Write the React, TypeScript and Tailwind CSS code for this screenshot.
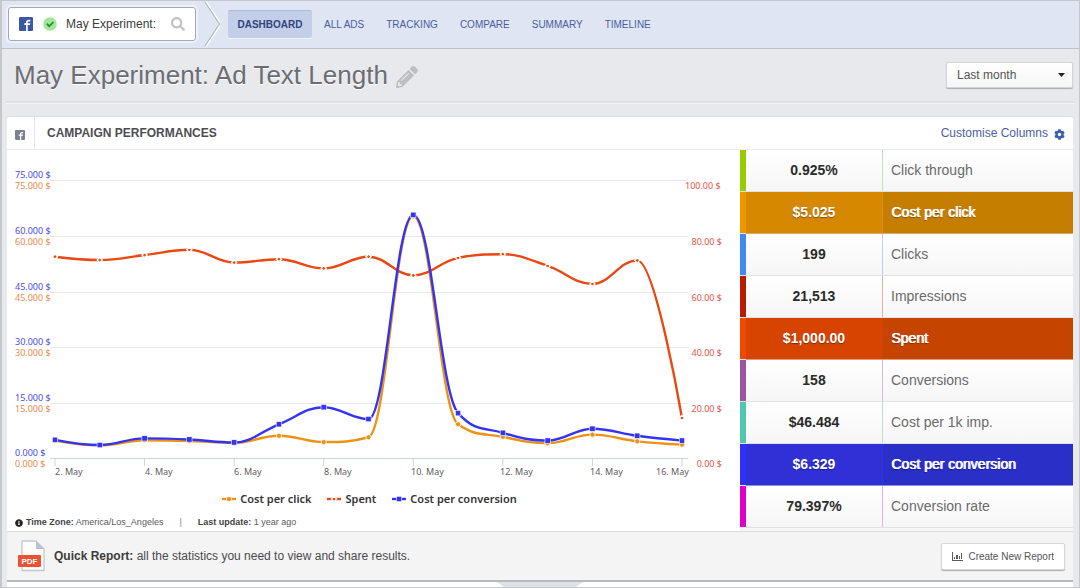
import clsx from 'clsx';
import { FaCog, FaInfoCircle, FaPencilAlt, FaSearch } from 'react-icons/fa';
import { ImFacebook2 } from 'react-icons/im';

type Marker = 'circle' | 'diamond' | 'square';

interface Series {
   name: string;
   color: string;
   marker: Marker;
   max: number;
   values: number[];
}

interface Point {
   x: number;
   y: number;
}

const NAV_ITEMS = ['ALL ADS', 'TRACKING', 'COMPARE', 'SUMMARY', 'TIMELINE'];

const STATS = [
   { value: '0.925%', label: 'Click through', strip: 'bg-[#99cc00]', divider: 'border-[#c5e3b4]' },
   {
      value: '$5.025',
      label: 'Cost per click',
      strip: 'bg-[#ee9500]',
      divider: 'border-[#e08f05]',
      active: 'border-[#dca768]',
      valueBg: 'bg-[#d68800]',
      labelBg: 'bg-[#c67e00]',
   },
   { value: '199', label: 'Clicks', strip: 'bg-[#4488f2]', divider: 'border-[#b9cff8]' },
   { value: '21,513', label: 'Impressions', strip: 'bg-[#b81c00]', divider: 'border-[#dfb0aa]' },
   {
      value: '$1,000.00',
      label: 'Spent',
      strip: 'bg-[#ee4b00]',
      divider: 'border-[#cf4600]',
      active: 'border-[#e39a78]',
      valueBg: 'bg-[#d64400]',
      labelBg: 'bg-[#c54400]',
   },
   { value: '158', label: 'Conversions', strip: 'bg-[#9c569f]', divider: 'border-[#d4bbd8]' },
   { value: '$46.484', label: 'Cost per 1k imp.', strip: 'bg-[#51c6b0]', divider: 'border-[#b7e2d2]' },
   {
      value: '$6.329',
      label: 'Cost per conversion',
      strip: 'bg-[#3030fa]',
      divider: 'border-[#3333e0]',
      active: 'border-[#8e90d8]',
      valueBg: 'bg-[#2f30d6]',
      labelBg: 'bg-[#2a2fc8]',
   },
   { value: '79.397%', label: 'Conversion rate', strip: 'bg-[#dd00c8]', divider: 'border-[#eeb0e2]' },
];

const SERIES: Series[] = [
   {
      name: 'Cost per click',
      color: '#ec9213',
      marker: 'circle',
      max: 75,
      values: [4.7, 3.4, 4.8, 4.6, 4.1, 6.0, 4.3, 5.6, 65.2, 9.1, 5.7, 4.0, 6.3, 4.5, 3.6],
   },
   {
      name: 'Spent',
      color: '#ea4711',
      marker: 'diamond',
      max: 100,
      values: [72.4, 71.2, 73.0, 74.9, 70.3, 71.5, 68.2, 72.4, 65.7, 72.0, 73.3, 69.1, 62.6, 71.1, 14.4],
   },
   {
      name: 'Cost per conversion',
      color: '#3333f5',
      marker: 'square',
      max: 75,
      values: [4.9, 3.5, 5.3, 5.0, 4.2, 9.1, 13.7, 10.5, 65.6, 12.1, 6.8, 4.7, 7.9, 6.0, 4.7],
   },
];

// Plot area, in viewBox units
const PLOT = { left: 48, right: 675, top: 30, bottom: 308 };
const GRID_LINES = [30, 86, 142, 197, 253, 308];
const LEFT_TICKS = ['75.000 $', '60.000 $', '45.000 $', '30.000 $', '15.000 $', '0.000 $'];
const RIGHT_TICKS = ['100.00 $', '80.00 $', '60.00 $', '40.00 $', '20.00 $', '0.00 $'];
const DATES = [
   { label: '2. May', x: 48 },
   { label: '4. May', x: 138 },
   { label: '6. May', x: 227 },
   { label: '8. May', x: 317 },
   { label: '10. May', x: 404 },
   { label: '12. May', x: 493 },
   { label: '14. May', x: 583 },
   { label: '16. May', x: 649 },
];

const stepX = (PLOT.right - PLOT.left) / 14;

function toPoints({ values, max }: Series): Point[] {
   return values.map((v, i) => ({
      x: PLOT.left + i * stepX,
      y: PLOT.bottom - (v / max) * (PLOT.bottom - PLOT.top),
   }));
}

// Smooth line that never overshoots its own data points
function splinePath(pts: Point[]) {
   let d = `M${pts[0].x} ${pts[0].y}`;
   let prevCtrl = pts[0];

   for (let i = 1; i < pts.length; i++) {
      const p = pts[i];
      const last = pts[i - 1];
      const next = pts[i + 1];
      let left = p;
      let right = p;

      if (next) {
         const lx = (1.5 * p.x + last.x) / 2.5;
         const rx = (1.5 * p.x + next.x) / 2.5;
         let ly = (1.5 * p.y + last.y) / 2.5;
         let ry = (1.5 * p.y + next.y) / 2.5;
         const fix = ((ry - ly) * (rx - p.x)) / (rx - lx) + p.y - ry;
         ly += fix;
         ry += fix;

         if (ly > last.y && ly > p.y) {
            ly = Math.max(last.y, p.y);
            ry = 2 * p.y - ly;
         } else if (ly < last.y && ly < p.y) {
            ly = Math.min(last.y, p.y);
            ry = 2 * p.y - ly;
         }
         if (ry > next.y && ry > p.y) {
            ry = Math.max(next.y, p.y);
            ly = 2 * p.y - ry;
         } else if (ry < next.y && ry < p.y) {
            ry = Math.min(next.y, p.y);
            ly = 2 * p.y - ry;
         }
         left = { x: lx, y: ly };
         right = { x: rx, y: ry };
      }

      d += ` C${prevCtrl.x} ${prevCtrl.y} ${left.x} ${left.y} ${p.x} ${p.y}`;
      prevCtrl = right;
   }
   return d;
}

function MarkerShape({ type, x, y, color }: { type: Marker; x: number; y: number; color: string }) {
   if (type === 'circle') {
      return <circle cx={x} cy={y} r="2.6" fill={color} stroke="#fff" strokeWidth="0.8" />;
   }
   if (type === 'diamond') {
      return (
         <path d={`M${x} ${y - 2.6}l2.6 2.6l-2.6 2.6l-2.6 -2.6z`} fill={color} stroke="#fff" strokeWidth="1.3" />
      );
   }
   return <rect x={x - 2.7} y={y - 2.7} width="5.4" height="5.4" fill={color} stroke="#fff" strokeWidth="0.6" />;
}

function Chart() {
   return (
      <svg
         viewBox="0 0 733 335"
         className="block h-auto w-full font-['Noto_Sans',sans-serif] text-[9px]"
         role="img"
         aria-label="Campaign performances"
      >
         {GRID_LINES.map((y, i) => (
            <g key={y}>
               <line
                  x1="43"
                  x2="681"
                  y1={y + 0.5}
                  y2={y + 0.5}
                  stroke={i === 5 ? '#c9d5ea' : '#e9e9e9'}
                  strokeWidth="1"
               />
               <text x="8" y={y - 2} fill="#4a4af5">
                  {LEFT_TICKS[i]}
               </text>
               <text x="8" y={y + 9} fill="#ea8a4a">
                  {LEFT_TICKS[i]}
               </text>
               <text x={i === 0 ? 678 : 715} y={y + 9} textAnchor={i === 0 ? 'start' : 'end'} fill="#ea5545">
                  {RIGHT_TICKS[i]}
               </text>
            </g>
         ))}
         {DATES.map(({ label, x }, i) => (
            <g key={label}>
               <line
                  x1={PLOT.left + i * 2 * stepX}
                  x2={PLOT.left + i * 2 * stepX}
                  y1="308"
                  y2="316"
                  stroke="#c9d5ea"
               />
               <text x={x} y="325" fill="#606060">
                  {label}
               </text>
            </g>
         ))}
         {SERIES.map((s) => {
            const pts = toPoints(s);
            return (
               <g key={s.name}>
                  <path d={splinePath(pts)} fill="none" stroke={s.color} strokeWidth="2.4" strokeLinejoin="round" />
                  {pts.map((p) => (
                     <MarkerShape key={p.x} type={s.marker} x={p.x} y={p.y} color={s.color} />
                  ))}
               </g>
            );
         })}
      </svg>
   );
}

function Legend() {
   return (
      <ul className="flex h-7 items-center justify-center gap-4 pr-2 font-['Noto_Sans',sans-serif] text-[11px] font-semibold text-[#333]">
         {SERIES.map((s) => (
            <li key={s.name} className="flex items-center gap-1">
               <svg width="14" height="8" viewBox="0 0 14 8">
                  <path d="M0 4h14" stroke={s.color} strokeWidth="2.4" />
                  <MarkerShape type={s.marker} x={7} y={4} color={s.color} />
               </svg>
               {s.name}
            </li>
         ))}
      </ul>
   );
}

function StatsTable() {
   return (
      <table className="h-[378px] w-full border-separate border-spacing-0 text-sm">
         <tbody>
            {STATS.map((s) => (
               <tr key={s.label} className="h-[42px]">
                  <td className={clsx('w-[6px] border-b border-[#e2e2e2] p-0', s.strip)} />
                  <td
                     className={clsx(
                        'w-[136px] border-b p-0 pb-px text-center font-bold',
                        s.active
                           ? [s.active, s.valueBg, 'text-white [text-shadow:0_1px_1px_#0006]']
                           : 'border-[#e2e2e2] bg-linear-to-b from-white to-[#f6f6f6] text-[#2b2b2b]',
                     )}
                  >
                     {s.value}
                  </td>
                  <th
                     scope="row"
                     className={clsx(
                        'border-b p-0 text-left font-normal',
                        s.active
                           ? [s.active, s.labelBg, 'text-white [text-shadow:1px_0_0_#fff,0_1px_1px_#0006]']
                           : 'border-[#e2e2e2] bg-linear-to-b from-white to-[#f6f6f6] text-[#6a6a6a]',
                     )}
                  >
                     <div className={clsx('flex h-[41px] items-center border-l pb-px pl-2', s.divider)}>{s.label}</div>
                  </th>
               </tr>
            ))}
         </tbody>
      </table>
   );
}

function TopBar() {
   return (
      <header className="flex h-12 items-center border-b border-[#bfc0c4] bg-[#dfe5f3] pb-px">
         <div className="ml-[6px] flex h-[34px] w-[188px] items-center rounded-[3px] border border-[#a6a9b1] bg-white px-[10px] shadow-[0_0_0_2px_#edf1f9]">
            <ImFacebook2 className="h-[14px] w-[14px] shrink-0 text-[#3a57a2]" />
            <svg className="ml-[10px] h-[14px] w-[14px] shrink-0" viewBox="0 0 14 14">
               <circle cx="7" cy="7" r="6.8" fill="#a5e69a" />
               <path d="M3.8 6.8l2.4 2.3l4.2-4" fill="none" stroke="#239a35" strokeWidth="2" />
            </svg>
            <input
               type="text"
               aria-label="Experiment"
               defaultValue="May Experiment:"
               className="ml-[9px] w-full min-w-0 bg-transparent text-xs text-[#3c3c3c] outline-none"
            />
            <FaSearch className="h-[14px] w-[14px] shrink-0 text-[#c4c4c4]" />
         </div>
         <svg className="ml-2 h-[46px] w-4" viewBox="0 0 16 46">
            <path d="M2.5 1L17 23L2.5 45" fill="none" stroke="#fff" strokeWidth="1.5" />
            <path d="M1 1L15.5 23L1 45" fill="none" stroke="#b3b6bd" strokeWidth="1.2" />
         </svg>
         <nav className="ml-2 flex items-center gap-[22px] text-[10px] text-[#4a5da0]">
            <a
               href="#dashboard"
               className="-mr-[10px] flex h-7 w-[84px] items-center justify-center rounded-[2px] border-t border-[#aebbd8] bg-[#c3cfe9] font-bold text-[#32437c] shadow-[0_1px_0_#f2f5fb]"
            >
               DASHBOARD
            </a>
            {NAV_ITEMS.map((item) => (
               <a key={item} href="#" className="hover:underline">
                  {item}
               </a>
            ))}
         </nav>
      </header>
   );
}

function PdfIcon() {
   return (
      <svg className="h-8 w-7" viewBox="0 0 28 32">
         <path d="M5 1h14l8 8v21.5H5z" fill="#fdfdfd" stroke="#c3c8d0" strokeWidth="1.3" strokeLinejoin="round" />
         <path d="M19 1l8 8h-8z" fill="#bcc2ca" />
         <rect x="1" y="15" width="23" height="12" rx="1" fill="#ec5232" />
         <text x="12.5" y="24" textAnchor="middle" fontSize="8" fontWeight="700" fill="#fff">
            PDF
         </text>
      </svg>
   );
}

export default function App() {
   return (
      <div className="border-t border-r border-b border-l-2 border-[#c6c7ca] bg-[#e8e9ed] font-['Liberation_Sans',Arial,sans-serif] text-[#444]">
         <TopBar />

         <div className="mx-1 flex h-[54px] items-center border-b-2 border-[#dedfe2] pr-[2px] pl-2 shadow-[0_1px_0_#f4f4f6]">
            <h1 className="text-[26px] leading-8 text-[#6b6d73] [text-shadow:0_1px_0_#fff]">
               May Experiment: Ad Text Length
            </h1>
            <button type="button" aria-label="Edit title" className="mt-1 ml-2 text-[#bdbec1]">
               <FaPencilAlt className="h-[22px] w-[22px]" />
            </button>
            <div className="relative ml-auto">
               <select
                  aria-label="Period"
                  className="h-[26px] w-[127px] appearance-none rounded-[2px] border border-[#d5d5d7] bg-linear-to-b from-white to-[#f6f6f6] pl-[10px] text-xs text-[#555] shadow-[0_1px_1px_#aaa]"
               >
                  <option>Last month</option>
               </select>
               <svg className="pointer-events-none absolute top-[11px] right-2" width="7" height="4" viewBox="0 0 7 4">
                  <path d="M0 0h7L3.5 4z" fill="#222" />
               </svg>
            </div>
         </div>

         <main className="mt-[13px] mr-[6px] ml-[5px]">
            <section className="rounded-t-[3px] border-t border-[#dcdde0] bg-white">
               <div className="flex h-[33px] items-center border-b border-[#ebebeb] pr-2">
                  <div className="flex h-full w-7 items-center border-r border-[#e4e4e4] pl-2">
                     <ImFacebook2 className="mt-1 h-[10px] w-[10px] text-[#7b808c]" />
                  </div>
                  <h2 className="ml-3 text-xs font-bold text-[#4c4d52]">CAMPAIGN PERFORMANCES</h2>
                  <a href="#columns" className="ml-auto flex items-center gap-[6px] text-xs text-[#4a5ea6]">
                     Customise Columns
                     <FaCog className="mt-[2px] h-[11px] w-[11px] text-[#3a5db0]" />
                  </a>
               </div>

               <div className="flex">
                  <div className="flex min-w-0 flex-1 flex-col">
                     <Chart />
                     <Legend />
                     <div className="flex flex-1 items-center pt-[2px] pl-2 text-[9px] text-[#5a5a5a]">
                        <FaInfoCircle className="mr-[3px] h-2 w-2 text-[#222]" />
                        <p>
                           <strong className="text-[#444]">Time Zone:</strong> America/Los_Angeles
                        </p>
                        <span className="mx-4 text-[#7a86a8]">|</span>
                        <p>
                           <strong className="text-[#444]">Last update:</strong> 1 year ago
                        </p>
                     </div>
                  </div>
                  <aside className="w-[333px] shrink-0 bg-[#f6f6f6] pb-[3px]">
                     <StatsTable />
                  </aside>
               </div>
            </section>

            <footer className="flex h-[49px] items-center border-t border-[#dcdcdc] bg-[#f4f4f4] pr-2 pl-[10px]">
               <PdfIcon />
               <p className="ml-[9px] text-xs text-[#4a4a4a]">
                  <strong className="text-[#3c3c3c]">Quick Report:</strong> all the statistics you need to view and share
                  results.
               </p>
               <button
                  type="button"
                  className="ml-auto flex h-[27px] items-center gap-[5px] rounded-[2px] border border-[#d8d8da] bg-white px-[10px] text-[10px] text-[#555] shadow-[0_1px_1px_#aaa]"
               >
                  <svg width="11" height="9" viewBox="0 0 11 9" fill="#5c5c5c">
                     <path d="M0 0h1v8h10v1H0zM2 5h1v2H2zM4 3h2v4H4zM7 4h1v3H7zM9 1h1v6H9z" />
                  </svg>
                  Create New Report
               </button>
            </footer>
            <div className="flex h-[7px] justify-center border-t-2 border-[#b5bac0] bg-white">
               <svg width="86" height="5" viewBox="0 0 86 5">
                  <path d="M0 0h86L79 5H7z" fill="#dde2e9" />
               </svg>
            </div>
         </main>
      </div>
   );
}
